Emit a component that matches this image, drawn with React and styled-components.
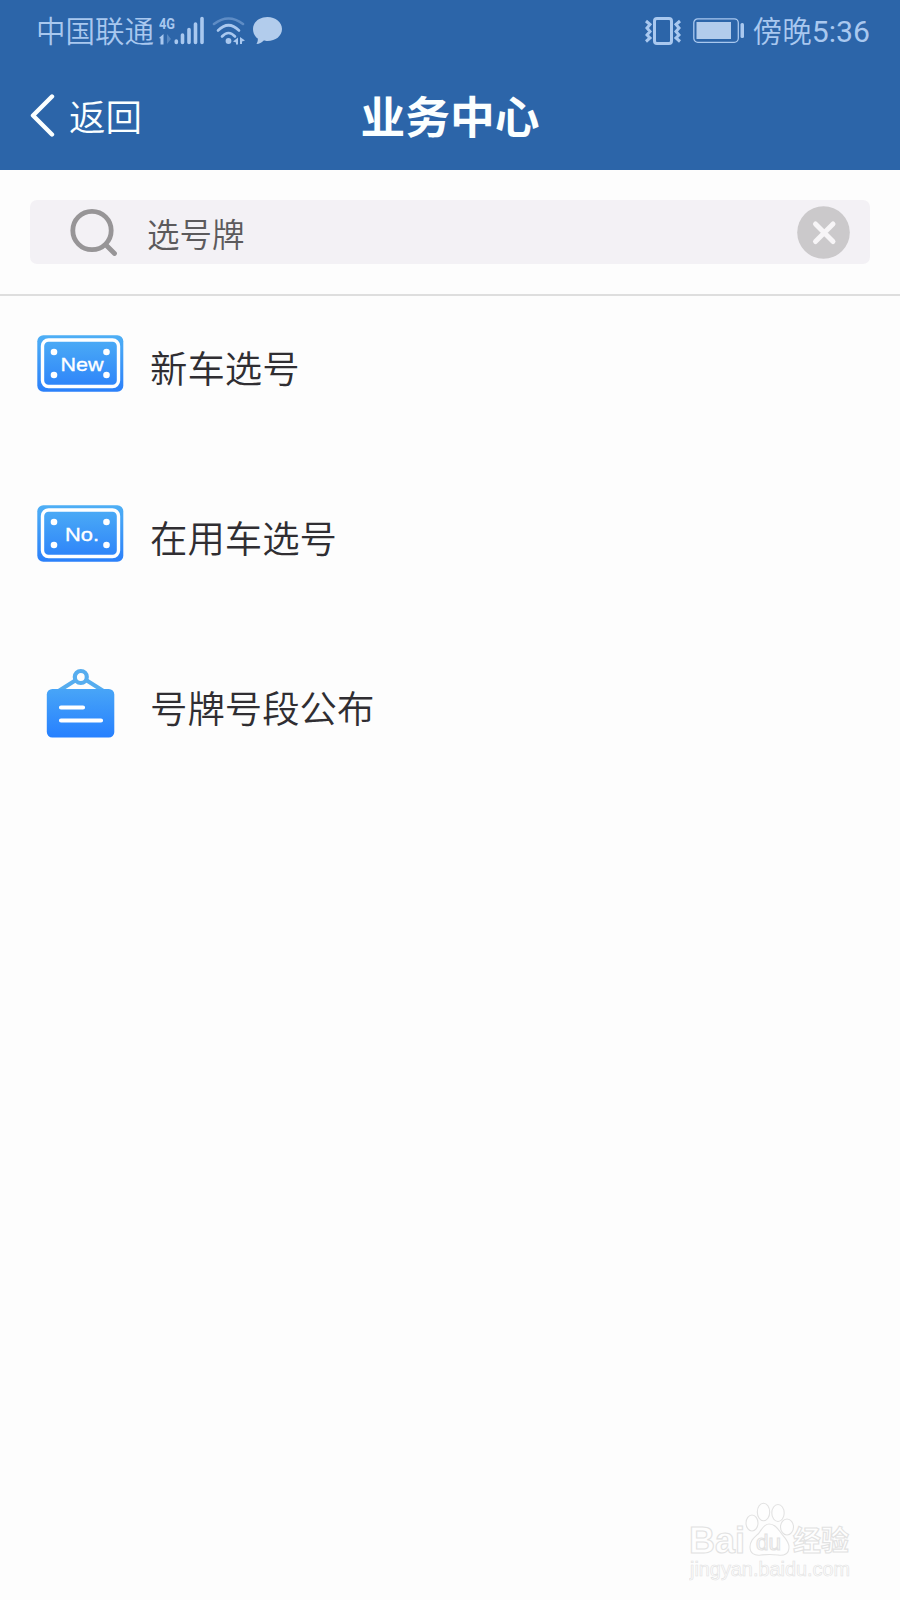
import React from "react";
import styled, { createGlobalStyle } from "styled-components";

const GlobalStyle = createGlobalStyle`
  * {
    box-sizing: border-box;
  }

  body {
    margin: 0;
    background: #fdfdfd;
    font-family: Roboto, "Noto Sans CJK SC", sans-serif;
  }

  svg {
    display: block;
    flex: none;
  }
`

const Screen = styled.div`
  position: relative;
  width: 900px;
  height: 1600px;
  overflow: hidden;
  background: #fdfdfd;
`

const Header = styled.header`
  height: 170px;
  background: #2c65a9;
`

const StatusBar = styled.div`
  height: 62px;
  padding: 0 30px 0 36px;
  display: flex;
  align-items: center;
  justify-content: space-between;
  color: #a9c8ef;
`

const StatusGroup = styled.div`
  display: flex;
  align-items: center;
  gap: ${props => props.$gap}px;
`

const StatusText = styled.span`
  padding-top: 2px;
  font-size: 29.5px;
  line-height: 60px;
  font-weight: 350;
  white-space: nowrap;
`

const Clock = styled.span`
  font-size: 30.2px;
  font-weight: 400;
`

const NavBar = styled.div`
  height: 108px;
  padding: 0 30px 2px;
  display: grid;
  grid-template-columns: 1fr auto 1fr;
  align-items: center;
  color: #fbffff;
`

const BackButton = styled.button`
  display: flex;
  align-items: center;
  gap: 14px;
  padding: 0;
  border: 0;
  background: none;
  color: inherit;
  font: 350 36.5px/54px "Noto Sans CJK SC", sans-serif;
`

const BackText = styled.span`
  padding-top: 2px;
`

const Title = styled.h1`
  margin: 0;
  font: 700 44.7px/60px "Noto Sans CJK SC", sans-serif;
`

const SearchArea = styled.div`
  padding: 30px;
  border-bottom: 2px solid #dedede;
`

const SearchBox = styled.div`
  height: 64px;
  padding: 0 20px 0 40px;
  display: flex;
  align-items: center;
  border-radius: 7px;
  background: #f3f1f5;
`

const SearchText = styled.span`
  flex: 1;
  margin-left: 29px;
  padding-top: 1px;
  font: 350 32.5px/48px "Noto Sans CJK SC", sans-serif;
  color: #5c5a5c;
`

const List = styled.ul`
  margin: 0;
  padding: 0;
  list-style: none;
`

const Item = styled.li`
  height: 170px;
  padding: 32px 37px 0;
  display: flex;
  align-items: flex-start;
  gap: 26px;
`

const ItemIcon = styled.div`
  width: 87px;
  height: 70px;
  display: flex;
  justify-content: center;
  align-items: center;
`

const ItemLabel = styled.span`
  padding-top: 4px;
  font: 350 37.4px/70px "Noto Sans CJK SC", sans-serif;
  color: #302e32;
`

const Watermark = styled.div`
  position: absolute;
  left: 689px;
  top: 1500px;
`

const SignalIcon = () => (
  <svg width="46" height="30" viewBox="0 0 46 30" fill="currentColor">
    <text x="0" y="12.5" fontSize="15" fontWeight="700" textLength="16" lengthAdjust="spacingAndGlyphs">4G</text>
    <path d="M0 22l4.5-4v10.500h-3v-6z" />
    <path d="M8 18v10l4-5z" opacity=".35" />
    <g stroke="currentColor" strokeWidth="3.600" strokeLinecap="round">
      <path d="M17.300 25v1.500M23.500 19v7.500M30 13.500v13M36.500 8v18.500M43 2.500v24" />
    </g>
  </svg>
)

const WifiIcon = () => (
  <svg width="34" height="30" viewBox="0 0 34 30" fill="none" stroke="currentColor" strokeWidth="2.600" strokeLinecap="round">
    <path d="M2 8Q16.500-3 31 8" opacity=".4" />
    <path d="M6 14.500Q16.500 4 27 14.500M10 20.500Q16.500 13.500 23 20.500" />
    <circle cx="16.500" cy="25" r="2.900" fill="currentColor" stroke="none" />
    <path d="M21 25.500l5-4v7h-2v-2zM28 21l5 3.500-3 1v2.500h-2z" fill="currentColor" stroke="none" />
  </svg>
)

const BubbleIcon = () => (
  <svg width="29" height="28" viewBox="0 0 29 28" fill="#b2ccec">
    <path d="M14.500 0C22.500 0 29 5 29 12s-6.500 12-14.500 12c-1.500 0-2.500 0-3.800-.4C8.500 26 6.500 27 3.500 27c1-1.500 1.500-3.500 1.300-5.500C1.800 19.500 0 16 0 12 0 5 6.500 0 14.500 0z" />
  </svg>
)

const VibrateIcon = () => (
  <svg width="36" height="28" viewBox="0 0 36 28" fill="none" stroke="currentColor" strokeWidth="3">
    <rect x="9.500" y="1.500" width="17" height="25" rx="2.500" />
    <path d="M1 4l4 3.500-3 3.500 3 3.500-3 3.500 3 3-4 3.500M35 4l-4 3.500 3 3.500-3 3.500 3 3.500-3 3 4 3.500" />
  </svg>
)

const BatteryIcon = () => (
  <svg width="52" height="26" viewBox="0 0 52 26" fill="none">
    <rect x=".8" y=".8" width="44.500" height="23.500" rx="4" stroke="currentColor" strokeWidth="1.300" />
    <rect x="3.500" y="4" width="34.500" height="17" fill="#b2ccec" />
    <rect x="47.500" y="5" width="3.500" height="15" rx="1.500" fill="currentColor" />
  </svg>
)

const BackIcon = () => (
  <svg width="25" height="43" viewBox="0 0 25 43" fill="none" stroke="currentColor" strokeWidth="4.400" strokeLinecap="round" strokeLinejoin="round">
    <path d="M22 2.500L3 21.500l19 19" />
  </svg>
)

const SearchIcon = () => (
  <svg width="48" height="48" viewBox="0 0 48 48" fill="none" stroke="#979597" strokeWidth="4.800" strokeLinecap="round">
    <circle cx="22" cy="22.500" r="19.200" />
    <path d="M36 37l8.500 8.500" />
  </svg>
)

const ClearIcon = () => (
  <svg width="53" height="53" viewBox="0 0 53 53">
    <circle cx="26.500" cy="26.500" r="26.300" fill="#cbc9cb" />
    <path d="M18.500 18l17.500 17.500M36 18L18.500 35.500" stroke="#f7f5f7" strokeWidth="5" strokeLinecap="round" />
  </svg>
)

const PlateIcon = ({ id, text, size }) => (
  <svg width="87" height="57" viewBox="0 0 87 57">
    <defs>
      <linearGradient id={id} x1="0" y1="0" x2="0" y2="1">
        <stop offset="0" stopColor="#4eaff5" />
        <stop offset="1" stopColor="#2b80fa" />
      </linearGradient>
    </defs>
    <rect x=".3" y=".3" width="86" height="56.400" rx="6" fill={`url(#${id})`} />
    <rect x="5.500" y="5" width="76" height="46.500" rx="6" fill="none" stroke="#fff" strokeWidth="3.400" />
    <g fill="#fff">
      <circle cx="17" cy="17" r="3.300" />
      <circle cx="69.500" cy="17" r="3.300" />
      <circle cx="17" cy="40" r="3.300" />
      <circle cx="69.500" cy="40" r="3.300" />
      <text x="45" y="35.500" fontSize="19" fontFamily="Liberation Sans, sans-serif" textAnchor="middle" textLength={size} lengthAdjust="spacingAndGlyphs" stroke="#fff" strokeWidth=".35">{text}</text>
    </g>
  </svg>
)

const BoardIcon = () => (
  <svg width="69" height="70" viewBox="0 0 69 70" fill="none">
    <defs>
      <linearGradient id="board" x1="0" y1="0" x2="0" y2="1">
        <stop offset="0" stopColor="#48a5f7" />
        <stop offset="1" stopColor="#2680ff" />
      </linearGradient>
    </defs>
    <path d="M30 12L11 24M40 12l19 12" stroke="#56adef" strokeWidth="4" />
    <circle cx="34.800" cy="9" r="6" stroke="#56adef" strokeWidth="4.200" />
    <rect x=".8" y="21" width="67.500" height="48.500" rx="5.500" fill="url(#board)" />
    <path d="M15 39.500h22M15 52.500h40" stroke="#fff" strokeWidth="4.200" strokeLinecap="round" />
  </svg>
)

const BaiduMark = () => (
  <svg width="168" height="82" viewBox="0 0 168 82" fill="#fefefe" stroke="#e2e2e2" strokeWidth="1.100" fontFamily="Liberation Sans, sans-serif">
    <text x="0" y="53" fontSize="37" fontWeight="700" textLength="56" lengthAdjust="spacingAndGlyphs">Bai</text>
    <ellipse cx="63" cy="23" rx="6" ry="8" />
    <ellipse cx="74.500" cy="12" rx="6.200" ry="8.800" />
    <ellipse cx="89" cy="13" rx="6.200" ry="8.500" />
    <ellipse cx="98" cy="27" rx="6.500" ry="8" />
    <path d="M80 24c6 0 9 5 12 9s8 8 8 14c0 7-5 9-11 8-6-.8-11-.8-17 0-7 1-11-2-11-8 0-7 5-10 9-14 3-4 5-9 10-9z" />
    <text x="67" y="49.500" fontSize="22" textLength="25" lengthAdjust="spacingAndGlyphs">du</text>
    <text x="104" y="51" fontSize="28" fontWeight="700" fontFamily="Noto Sans CJK SC, sans-serif" textLength="56">经验</text>
    <text x="1" y="76" fontSize="19.500" strokeWidth=".6" textLength="160" lengthAdjust="spacingAndGlyphs">jingyan.baidu.com</text>
  </svg>
)

const items = [
  { label: '新车选号', icon: <PlateIcon id="plate-new" text="New" size={43} /> },
  { label: '在用车选号', icon: <PlateIcon id="plate-no" text="No." size={34} /> },
  { label: '号牌号段公布', icon: <BoardIcon /> },
]

const App = () => {
  return (
    <Screen>
      <GlobalStyle />
      <Header>
        <StatusBar>
          <StatusGroup $gap={7}>
            <StatusGroup $gap={5}>
              <StatusText>中国联通</StatusText>
              <SignalIcon />
            </StatusGroup>
            <WifiIcon />
            <BubbleIcon />
          </StatusGroup>
          <StatusGroup $gap={8}>
            <StatusGroup $gap={12}>
              <VibrateIcon />
              <BatteryIcon />
            </StatusGroup>
            <StatusText>傍晚<Clock>5:36</Clock></StatusText>
          </StatusGroup>
        </StatusBar>
        <NavBar>
          <BackButton>
            <BackIcon />
            <BackText>返回</BackText>
          </BackButton>
          <Title>业务中心</Title>
        </NavBar>
      </Header>
      <SearchArea>
        <SearchBox>
          <SearchIcon />
          <SearchText>选号牌</SearchText>
          <ClearIcon />
        </SearchBox>
      </SearchArea>
      <List>
        {items.map(item => (
          <Item key={item.label}>
            <ItemIcon>{item.icon}</ItemIcon>
            <ItemLabel>{item.label}</ItemLabel>
          </Item>
        ))}
      </List>
      <Watermark>
        <BaiduMark />
      </Watermark>
    </Screen>
  )
}

export default App
